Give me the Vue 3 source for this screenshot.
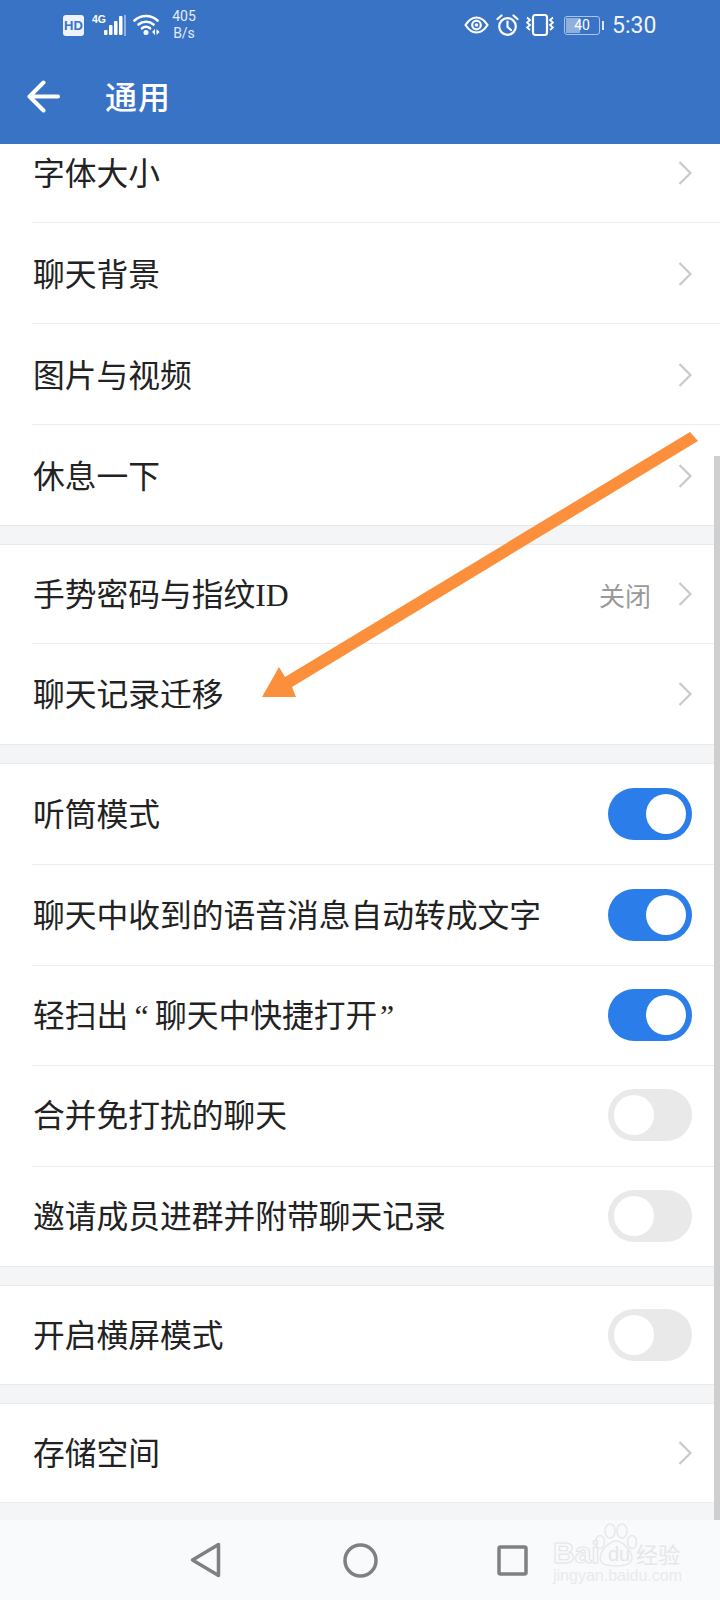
<script setup>
const groups = [
  { cls: 'g1', rows: [
    { t: '字体大小', nav: true, cls: 'clipped' },
    { t: '聊天背景', nav: true },
    { t: '图片与视频', nav: true },
    { t: '休息一下', nav: true },
  ]},
  { cls: 'g2', rows: [
    { t: '手势密码与指纹ID', nav: true, val: '关闭', cls: 'short' },
    { t: '聊天记录迁移', nav: true },
  ]},
  { cls: 'g3', rows: [
    { t: '听筒模式', on: true },
    { t: '聊天中收到的语音消息自动转成文字', on: true },
    { t: '轻扫出\u2009“\u2009聊天中快捷打开\u200a”', on: true },
    { t: '合并免打扰的聊天', on: false },
    { t: '邀请成员进群并附带聊天记录', on: false },
  ]},
  { cls: 'g4', rows: [{ t: '开启横屏模式', on: false, cls: 'short' }]},
  { cls: 'g4', rows: [{ t: '存储空间', nav: true, cls: 'short' }]},
]
</script>

<template>
  <div class="page">
    <header class="top">
      <div class="status">
        <span class="hd">HD</span>
        <div class="sigwrap">
          <span class="fourg">4G</span>
          <svg width="22" height="22" viewBox="12 0 22 22">
            <rect x="12" y="16" width="3.500" height="5" rx="1" fill="#fff"/>
            <rect x="17" y="11" width="3.500" height="10" rx="1" fill="#fff"/>
            <rect x="22" y="7" width="3.500" height="14" rx="1" fill="#fff"/>
            <rect x="27" y="2" width="3.500" height="19" rx="1" fill="#fff"/>
            <rect x="32" y="1" width="2" height="21" fill="#8fb2e2"/>
          </svg>
        </div>
        <svg class="wifi" width="27" height="22" viewBox="0 0 27 22" fill="none" stroke="#fff" stroke-width="2.600" stroke-linecap="round">
          <path d="M1.500 6.500A17 17 0 0 1 24.500 6.500"/>
          <path d="M5.500 10.500A11.500 11.500 0 0 1 20.500 10.500"/>
          <path d="M9 14.300A6.300 6.300 0 0 1 17 14.300"/>
          <circle cx="13" cy="18.500" r="2.500" fill="#fff" stroke="none"/>
          <path d="M22 15v6l-3-3zM23.500 15v6l3-3z" fill="#fff" stroke="none"/>
        </svg>
        <div class="speed"><span>405</span><span>B/s</span></div>
        <svg class="eye" width="25" height="18" viewBox="0 0 25 18" fill="none" stroke="#fff" stroke-width="2.200">
          <path d="M1.500 9C5 3.500 8.500 1.500 12.500 1.500S20 3.500 23.500 9C20 14.500 16.500 16.500 12.500 16.500S5 14.500 1.500 9Z"/>
          <circle cx="12.500" cy="9" r="4.300"/>
          <circle cx="12.500" cy="9" r="1.800" fill="#fff" stroke="none"/>
        </svg>
        <svg class="alarm" width="23" height="22" viewBox="0 0 23 22" fill="none" stroke="#fff" stroke-width="2.200">
          <circle cx="11.500" cy="12.500" r="8.300"/>
          <path d="M11.500 7.500V13l3.500 3" stroke-linecap="round"/>
          <path d="M1.500 5L5.500 1.500M21.500 5L17.500 1.500" stroke-linecap="round"/>
        </svg>
        <svg class="vib" width="28" height="22" viewBox="0 0 28 22" fill="none" stroke="#fff">
          <rect x="7" y="1" width="14" height="20" rx="2.500" stroke-width="2.200"/>
          <path d="M1 3.500l3 2.500-3 2.500 3 2.500-3 2.500 3 2.500M27 3.500l-3 2.500 3 2.500-3 2.500 3 2.500-3 2.500" stroke-width="1.800"/>
        </svg>
        <div class="batt">
          <div class="cell"><i class="lvl"></i><span class="pct">40</span></div>
          <b class="nub"></b>
        </div>
        <span class="time">5:30</span>
      </div>
      <div class="bar">
        <svg width="33" height="33" viewBox="0 0 33 33" fill="none" stroke="#fff" stroke-width="4" stroke-linecap="round" stroke-linejoin="round">
          <path d="M16.500 2.500L2.500 16.500L16.500 30.500M2.500 16.500H31"/>
        </svg>
        <h1>通用</h1>
      </div>
    </header>

    <main class="list">
      <section v-for="(g, i) in groups" :key="i" class="group" :class="g.cls">
        <div v-for="r in g.rows" :key="r.t" class="row" :class="r.cls">
          <span class="label">{{ r.t }}</span>
          <span v-if="r.val" class="val">{{ r.val }}</span>
          <svg v-if="r.nav" class="chev" width="14" height="26" viewBox="0 0 14 26" fill="none" stroke="#c9c9c9" stroke-width="2.200">
            <path d="M1.500 2L12.500 13L1.500 24"/>
          </svg>
          <span v-else class="sw" :class="{ on: r.on }"><i></i></span>
        </div>
      </section>
    </main>

    <nav class="nav">
      <svg width="31" height="36" viewBox="0 0 31 36" fill="none" stroke="#808080" stroke-width="3.500" stroke-linejoin="round"><path d="M28.500 2.500V33.500L2.500 18Z"/></svg>
      <svg width="35" height="35" viewBox="0 0 35 35" fill="none" stroke="#808080" stroke-width="3.500"><circle cx="17.500" cy="17.500" r="15.500"/></svg>
      <svg width="31" height="31" viewBox="0 0 31 31" fill="none" stroke="#808080" stroke-width="3.500" stroke-linejoin="round"><rect x="2" y="2" width="27" height="27" rx="1.500"/></svg>
    </nav>

    <div class="scroll"></div>

    <svg class="arrow" width="720" height="1600" viewBox="0 0 720 1600">
      <polygon points="690,432 698,441 292,687 296,697 262,697 279,667 285,677" fill="#fb8f3c"/>
    </svg>

    <div class="mark">
      <svg class="paw" width="42" height="44" viewBox="0 0 42 44" fill="#f9fafc" stroke="#e6e8ea" stroke-width="1.500">
        <ellipse cx="15" cy="8" rx="5" ry="7"/>
        <ellipse cx="27" cy="8" rx="5" ry="7"/>
        <ellipse cx="5" cy="19" rx="4.500" ry="6.500"/>
        <ellipse cx="37" cy="19" rx="4.500" ry="6.500"/>
        <path d="M21 18C14 18 5 29 5 35C5 41 11 43 21 43C31 43 37 41 37 35C37 29 28 18 21 18Z"/>
      </svg>
      <span class="bai">Bai</span>
      <span class="du">du</span>
      <span class="jy">经验</span>
      <span class="url">jingyan.baidu.com</span>
    </div>
  </div>
</template>

<style>
body { margin: 0; background: #fff; }
</style>

<style scoped>
.page {
  position: relative;
  width: 720px;
  height: 1600px;
  overflow: hidden;
  display: flex;
  flex-direction: column;
  background: #f4f5f7;
  font-family: "Liberation Serif", "Noto Sans CJK SC", serif;
  color: #222;
}
.top { height: 144px; flex: none; background: #3973c5; color: #fff; }
.status {
  height: 50px;
  padding: 0 65px 0 63px;
  display: flex;
  align-items: center;
  font-family: Roboto, "Liberation Sans", sans-serif;
}
.hd {
  width: 21px; height: 21px; margin-top: 1px;
  border-radius: 3px;
  background: #eef3fb;
  color: #3973c5;
  font: 700 13px/21px "Liberation Sans", sans-serif;
  text-align: center;
}
.sigwrap { position: relative; margin-left: 8px; padding-left: 12px; width: 22px; height: 22px; }
.fourg {
  position: absolute; left: 0; top: 0;
  font: 700 10.500px/10px "Liberation Sans", sans-serif;
  color: #fff;
}
.wifi { margin-left: 7px; }
.speed {
  margin-left: 11px; width: 26px;
  display: flex; flex-direction: column; align-items: center;
  font-size: 14px; line-height: 17px; color: #e4ecf8;
}
.eye { margin-left: auto; }
.alarm { margin-left: 7px; }
.vib { margin-left: 7px; }
.batt { margin-left: 10px; display: flex; align-items: center; gap: 2px; }
.cell {
  position: relative; width: 36px; height: 19px; box-sizing: border-box;
  border: 1.500px solid #a9c4ea; border-radius: 3px;
  display: flex; align-items: center; justify-content: center;
}
.lvl { position: absolute; left: 1px; top: 1px; bottom: 1px; width: 14px; background: #8fafdd; }
.pct { position: relative; font-size: 14px; line-height: 1; color: #fff; }
.nub { width: 2px; height: 9px; background: #dfe8f6; }
.time { margin-left: 8px; font-size: 23px; width: 43px; color: #eef3fb; white-space: nowrap; }
.bar {
  height: 94px;
  padding: 0 0 2px 27px;
  box-sizing: border-box;
  display: flex;
  align-items: center;
}
.bar h1 {
  margin: 4px 0 0 45px;
  font-size: 32px;
  font-weight: 500;
  line-height: 40px;
  letter-spacing: 1px;
}
.list { flex: 1; display: flex; flex-direction: column; }
.group {
  background: #fff;
  border-bottom: 1px solid #e9eaeb;
  margin-bottom: 18px;
}
.g2, .g3, .g4 { border-top: 1px solid #e9eaeb; }
.row {
  position: relative;
  height: 101px;
  box-sizing: border-box;
  padding: 0 28px 0 33px;
  display: flex;
  align-items: center;
}
.row + .row::before {
  content: "";
  position: absolute;
  left: 32px; right: 0; top: 0;
  height: 1px;
  background: #ededee;
}
.g1 .row { padding-top: 3px; }
.g1 .row.clipped { height: 78px; padding: 0 28px 20px 33px; }
.row.short { height: 98px; }
.g3 .row { height: 100.400px; }
.label { font-size: 31.750px; line-height: 40px; padding-top: 4px; flex: 1; white-space: nowrap; }
.val { font-size: 26px; color: #999; margin-right: 27px; }
.chev { flex: none; }
.sw {
  width: 84px; height: 52px;
  border-radius: 26px;
  background: #e9e9e9;
  display: flex;
  align-items: center;
  padding: 0 6px;
  box-sizing: border-box;
}
.sw i { width: 40px; height: 40px; border-radius: 50%; background: #fff; display: block; }
.sw.on { background: #2b7de9; justify-content: flex-end; }
.nav {
  position: absolute; left: 0; right: 0; bottom: 0;
  height: 80px;
  background: #f9fafc;
  padding-left: 190px;
  display: flex;
  align-items: center;
  gap: 122px;
}
.nav svg:last-child { margin-left: -3px; }
.scroll {
  position: absolute; left: 714px; top: 456px;
  width: 6px; height: 1064px;
  background: #cfcfcf;
}
.arrow { position: absolute; left: 0; top: 0; pointer-events: none; }
.mark {
  position: absolute; left: 553px; top: 1523px;
  width: 130px; height: 62px;
  font-family: "Liberation Sans", sans-serif;
}
.paw { position: absolute; left: 42px; top: 0; }
.bai, .du, .jy, .url { position: absolute; white-space: nowrap; line-height: 1; }
.bai {
  left: 0; top: 15px;
  font-size: 30px; font-weight: 700;
  color: #f9fafc;
  -webkit-text-stroke: 1px #e2e4e7;
}
.du { left: 55px; top: 21px; font-size: 20px; color: #e4e6e9; }
.jy {
  left: 83px; top: 19px;
  font-family: "Noto Sans CJK SC", sans-serif;
  font-size: 22px; color: #e4e6e9;
}
.url { left: 0; top: 45px; font-size: 16px; color: #e8eaec; }
</style>
